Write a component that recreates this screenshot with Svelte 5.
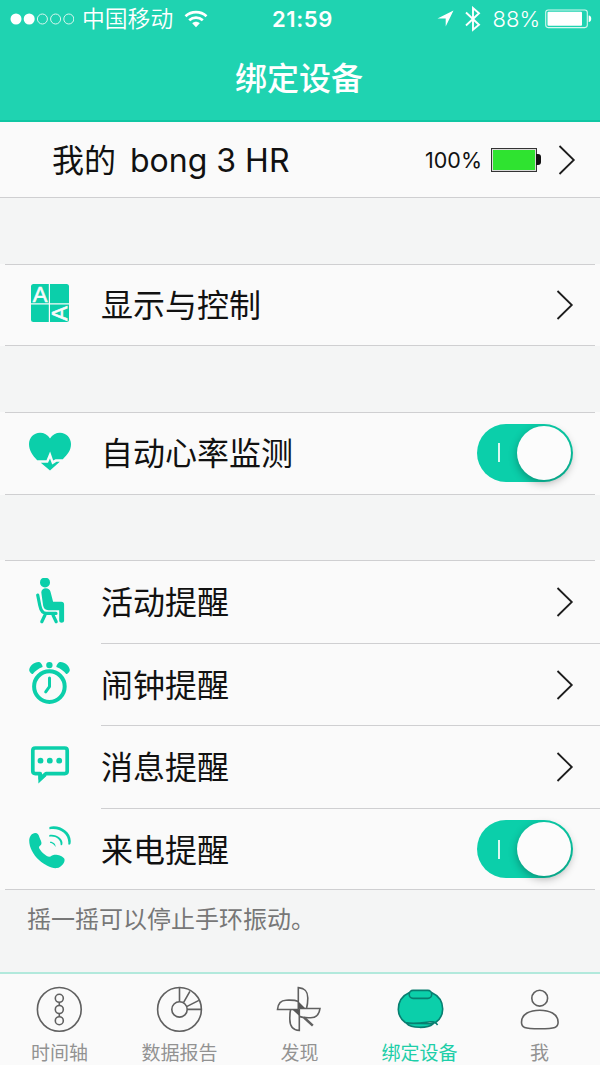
<script lang="ts">
    type Item = { icon: string; label: string; toggle?: boolean };

    let groups = $state<Item[][]>([
        [{ icon: 'display', label: '显示与控制' }],
        [{ icon: 'heart', label: '自动心率监测', toggle: true }],
        [
            { icon: 'activity', label: '活动提醒' },
            { icon: 'alarm', label: '闹钟提醒' },
            { icon: 'message', label: '消息提醒' },
            { icon: 'call', label: '来电提醒', toggle: true }
        ]
    ]);

    const tabs = [
        { id: 'timeline', label: '时间轴' },
        { id: 'report', label: '数据报告' },
        { id: 'discover', label: '发现' },
        { id: 'device', label: '绑定设备' },
        { id: 'me', label: '我' }
    ];
    let activeTab = $state('device');
</script>

{#snippet chevron()}
    <svg class="chevron" width="18" height="30" viewBox="0 0 18 30">
        <path d="M1.5 1 15.8 15 1.5 29" fill="none" stroke="#1c1c1c" stroke-width="1.8" />
    </svg>
{/snippet}

{#snippet rowIcon(name: string)}
    <svg class="row-icon" width="48" height="48" viewBox="0 0 48 48">
        {#if name === 'display'}
            <rect x="6" y="3" width="38" height="38" rx="2.5" />
            <path d="M24.4 3v38M6 22.8h38" stroke="#fafafa" stroke-width="1.2" />
            <text x="15" y="20.8" text-anchor="middle">A</text>
            <text x="0" y="0" text-anchor="middle" transform="translate(42.3 32.3) rotate(-90)">A</text>
        {:else if name === 'heart'}
            <path
                d="M25 9.4C22.8 5.7 19 3.8 15 3.8 8.6 3.8 4 8.9 4 15.1c0 6.3 3.3 11.3 8.2 16.1h9.3l3.6-8.7 3.1 9.1 2.3-1.4h7.3C42.9 25.5 46 21 46 15.1 46 8.9 41.2 3.8 35 3.8c-4 0-7.7 1.9-10 5.6z"
            />
            <path d="M15.8 33.7h7.2l2-4.200 2.200 6 4.400-2.700h3.200L25 41.500z" />
        {:else if name === 'activity'}
            <circle cx="20" cy="4.4" r="5" />
            <path
                d="M16.300 14.500c0-2.500 1.900-4.300 4.500-4.300 2.400 0 4.200 1.300 4.700 3.500l2.600 10.100h8.300c1.700 0 2.700 1.100 2.700 2.600v16c0 3-4.900 3-4.900 0V32.200H23.300c-3 0-4.600-1.500-5.200-4.600z"
            />
            <path
                class="line"
                d="M12.700 17l2.100 10.500c.9 4.600 2.700 7.900 6.600 7.900H31M20 37l-3.200 6.700M28 37l3.200 6.700"
                stroke-width="3.200"
            />
        {:else if name === 'alarm'}
            <circle class="line" cx="24.4" cy="26.600" r="15.300" stroke-width="4" />
            <path class="line" d="M24.500 18v8.600l-3.800 5.200" stroke-width="3" />
            <circle cx="24.400" cy="5.100" r="3.200" />
            <path d="M4.200 10C4.200 6 9.500 1.600 14 1.900c2.200.4 3.800 3.900 3.600 5-4.300 1.500-7.200 3.800-9.800 7.200-1.500 0-3.500-2.300-3.600-4.100z" />
            <path d="M44.800 10c0-4-5.300-8.400-9.800-8.100-2.200.4-3.800 3.900-3.600 5 4.300 1.500 7.200 3.800 9.800 7.200 1.500 0 3.500-2.300 3.600-4.100z" />
        {:else if name === 'message'}
            <path
                class="line"
                d="M10.300 5h29.400c1.500 0 2.500 1 2.500 2.500v20.600c0 1.500-1 2.500-2.500 2.500H21l-5.800 5V30.600h-4.900c-1.500 0-2.500-1-2.500-2.500V7.500C7.800 6 8.800 5 10.300 5z"
                stroke-width="3.700"
            />
            <path d="M13.400 31v9.600l8-7.600z" />
            <circle cx="15.500" cy="17.700" r="2.900" />
            <circle cx="24.800" cy="17.700" r="2.900" />
            <circle cx="34.200" cy="17.700" r="2.900" />
        {:else if name === 'call'}
            <path
                d="M4.200 15.500c0-4 2.700-7.600 6-7.600 2.600 0 3.400 1.700 4.300 4.500.8 2.200 2.400 4.500 1.900 6.600-.4 1.500-2.500 2-2.400 3.500.4 2.800 7.300 9.200 10.300 9.200 1.900 0 2.500-1.600 5-1.900 3.200-.3 8.300 1.200 9.900 3.700 1.800 3-2.700 9-7.200 9.600-5.500.7-12.400-3.300-18-8.200C8.200 29.800 4.200 22.300 4.200 15.500z"
            />
            <path d="M24.400 1.900C34.500-1 47.700 7 45.500 18.600c-.3 1.500-2.300 1.500-2.200 0C44 8.500 34.500 2.300 24.400 4.300z" />
            <path d="M24.300 9.900c6.400-1.500 14.800 4 13 9.700-.4 1.100-1.700.9-1.700-.2.300-5.200-5.500-8.900-11.300-7.700z" />
            <path d="M25 16.700c3-.2 6 2.200 5.500 5.200-1-2.100-2.900-3.800-5.500-4.200z" />
        {/if}
    </svg>
{/snippet}

{#snippet tabIcon(name: string)}
    <svg class="tab-icon" width="48" height="48" viewBox="0 0 48 48">
        {#if name === 'timeline'}
            <circle cx="23.300" cy="23.400" r="21.900" />
            <circle cx="23.300" cy="12.300" r="4" />
            <circle cx="23.300" cy="23.500" r="4" />
            <circle cx="23.300" cy="34.700" r="4" />
            <path d="M23.300 16.300v3.200M23.300 27.500v3.200" />
        {:else if name === 'report'}
            <circle cx="23.500" cy="23.400" r="21.900" />
            <circle cx="23.500" cy="23.400" r="7.700" />
            <path d="M23.500 1.500v14.200M27.500 16.700 33.900 5.300M30.600 20.600l12.300-6.200M31.200 23.400h14.200" />
        {:else if name === 'discover'}
            <path d="M22.300 23V1.600c7.400.8 9.500 4.400 9.500 10.400 0 3.900-.4 7.300-1.300 10.500" />
            <path d="M22.300 23.500H1.500C2 18 5 14.200 10 14.200c4.600 0 8.500-.5 12.300 1.200" />
            <path d="M23.300 23v21.500c-6.300-.3-9.500-4.600-9.500-11.500 0-3.500 0-6.500.8-9.500" />
            <path d="M23.300 22.500H44c-.8 6-4 9.200-9.300 9.200-4.400 0-8 .3-11.400-1.400" />
            <path d="M22.500 15.500l7 7h-6.200v7.500l-7-6.500h6.200z" fill="#575757" stroke="none" />
            <path d="M28 31.500l8.800 8.200" stroke-width="2.400" />
        {:else if name === 'device'}
            <path class="band" d="M10.500 37.200c4.500 5.400 21.500 5.400 26.500.6z" />
            <path
                class="band"
                d="M13.500 6.500C5.500 10 2.300 16 2.300 23.500c0 5.300 2.500 9.700 7 13 8.500 1.800 17 .2 25-.7 3.300-.3 4.300 1.100 5.300.700 4.600-3.200 7.100-7.900 7.100-13.400 0-7.500-3.400-13.100-11.200-16.600z"
            />
            <rect class="band" x="13.200" y="4.400" width="22.500" height="8" rx="3.800" />
            <path d="M34.300 35.800c3.300-.2 5.700.8 7.300 3.200" />
        {:else}
            <circle cx="23.700" cy="12.200" r="7.900" />
            <path d="M23.700 24.200c9.500 0 18.400 3.500 18.400 12 0 5.200-2.500 6.600-18.400 6.600S5.500 41.400 5.500 36.200c0-8.500 8.700-12 18.200-12z" />
        {/if}
    </svg>
{/snippet}

<div class="screen">
    <header>
        <div class="status-bar">
            <div class="status-side">
                <svg width="64" height="14" viewBox="0 0 64 14">
                    {#each [0, 1, 2, 3, 4] as i}
                        <circle
                            cx={6 + i * 13.2}
                            cy="7"
                            r={i < 2 ? 5.5 : 5}
                            fill={i < 2 ? '#fff' : 'none'}
                            stroke={i < 2 ? 'none' : '#d8f7ef'}
                        />
                    {/each}
                </svg>
                <span class="carrier">中国移动</span>
                <svg class="wifi" width="24" height="18" viewBox="0 0 24 18">
                    <path d="M1.500 6.200c6-5.500 15-5.500 21 0M5.200 10.300c4-3.700 9.600-3.700 13.600 0" fill="none" stroke="#fff" stroke-width="2.700" />
                    <path d="M8.200 13.200c2.200-2 5.400-2 7.600 0L12 17.200z" fill="#fff" />
                </svg>
            </div>
            <span class="time">21:59</span>
            <div class="status-side right">
                <svg width="17" height="17" viewBox="0 0 17 17">
                    <path d="M16.500.5 8.700 16.500V8.500H.500z" fill="#fff" />
                </svg>
                <svg class="bluetooth" width="16" height="26" viewBox="0 0 16 26">
                    <path d="M1 6.500l13 12.300-6 5V2l6 5.200L1 19.500" fill="none" stroke="#fff" stroke-width="1.900" />
                </svg>
                <span class="percent">88%</span>
                <svg width="47" height="20" viewBox="0 0 47 20">
                    <rect x=".7" y="1" width="41.600" height="17.600" rx="2.500" fill="none" stroke="#d8f7ef" stroke-width="1.100" />
                    <rect x="2.500" y="2.800" width="34.500" height="14" rx="1" fill="#fff" />
                    <path d="M43.700 6.500c3.400 0 3.400 6.600 0 6.600z" fill="#fff" />
                </svg>
            </div>
        </div>
        <h1>绑定设备</h1>
    </header>

    <main>
        <div class="device">
            <span class="device-name"><span class="owner">我的</span> bong 3 HR</span>
            <span class="device-percent">100%</span>
            <div class="battery"><div class="battery-level"></div></div>
            {@render chevron()}
        </div>

        {#each groups as group}
            <div class="group">
                {#each group as item}
                    <div class="row">
                        {@render rowIcon(item.icon)}
                        <div class="row-body">
                            <span class="row-label">{item.label}</span>
                            {#if item.toggle === undefined}
                                {@render chevron()}
                            {:else}
                                <button
                                    class="toggle"
                                    class:on={item.toggle}
                                    role="switch"
                                    aria-checked={item.toggle}
                                    aria-label={item.label}
                                    onclick={() => (item.toggle = !item.toggle)}
                                >
                                    <span class="mark"></span>
                                    <span class="knob"></span>
                                </button>
                            {/if}
                        </div>
                    </div>
                {/each}
            </div>
        {/each}
        <p class="hint">摇一摇可以停止手环振动。</p>
    </main>

    <nav>
        {#each tabs as tab}
            <button class="tab" class:active={tab.id === activeTab} onclick={() => (activeTab = tab.id)}>
                {@render tabIcon(tab.id)}
                <span>{tab.label}</span>
            </button>
        {/each}
    </nav>
</div>

<style>
    .screen {
        --accent: #0bcfaa;
        --line: #cfcfd1;
        display: flex;
        flex-direction: column;
        width: 600px;
        height: 1065px;
        overflow: hidden;
        background: #f4f5f5;
        color: #111;
        font-family: Inter, "Noto Sans CJK SC", sans-serif;
    }

    svg {
        display: block;
        flex-shrink: 0;
    }

    button {
        padding: 0;
        border: 0;
        font: inherit;
        cursor: pointer;
    }

    header {
        box-sizing: border-box;
        height: 122px;
        border-bottom: 2px solid #0fc7a3;
        background: #1fd3b1;
        color: #fff;
    }

    .status-bar {
        display: flex;
        align-items: center;
        height: 37px;
        padding: 0 8px 0 10px;
    }

    .status-side {
        display: flex;
        flex: 1;
        align-items: center;
    }

    .status-side.right {
        justify-content: flex-end;
    }

    .carrier {
        margin-left: 8px;
        font-size: 22.8px;
        line-height: 36px;
        font-weight: 350;
    }

    .wifi {
        margin-left: 11px;
    }

    .time {
        padding-left: 3px;
        font-size: 22px;
        font-weight: 600;
        letter-spacing: 0.6px;
    }

    .bluetooth {
        margin-left: 11px;
    }

    .percent {
        margin: 0 5px 0 11px;
        font-size: 22px;
        font-weight: 350;
    }

    h1 {
        margin: 20px 0 0;
        padding-right: 2px;
        font-size: 32px;
        font-weight: 500;
        line-height: 44px;
        text-align: center;
    }

    main {
        flex: 1;
    }

    .device {
        box-sizing: border-box;
        display: flex;
        align-items: center;
        height: 76px;
        padding: 0 24px 0 52px;
        border-bottom: 1px solid var(--line);
        background: #fafafa;
    }

    .device-name {
        flex: 1;
        padding-bottom: 3px;
        font-size: 32px;
    }

    .owner {
        margin-right: 5px;
    }

    .device-percent {
        font-size: 21.5px;
    }

    .battery {
        position: relative;
        box-sizing: border-box;
        width: 46px;
        height: 24px;
        margin: 0 21px 0 9px;
        padding: 1px;
        border: 1px solid #333;
        background: #d9d9d9;
    }

    .battery::after {
        content: "";
        position: absolute;
        top: 5px;
        left: 44px;
        width: 5px;
        height: 11px;
        border-radius: 0 3px 3px 0;
        background: #111;
    }

    .battery-level {
        height: 100%;
        background: #2fe330;
    }

    .group {
        margin-top: 65.8px;
        background: linear-gradient(var(--line), var(--line)) 5px 0 / 590px 1px no-repeat,
            linear-gradient(var(--line), var(--line)) 5px 100% / 590px 1px no-repeat, #fafafa;
    }

    .row {
        display: flex;
        align-items: center;
        height: 82.5px;
        padding-left: 25px;
    }

    .row-body {
        box-sizing: border-box;
        display: flex;
        flex: 1;
        align-items: center;
        justify-content: space-between;
        height: 100%;
        margin-left: 28px;
        padding-right: 26px;
    }

    .row + .row .row-body {
        border-top: 1px solid var(--line);
    }

    .row-label {
        padding-top: 2px;
        font-size: 32px;
        line-height: 46px;
    }

    .row-icon {
        fill: var(--accent);
    }

    .row-icon text {
        fill: #fafafa;
        stroke: #fafafa;
        stroke-width: 0.6;
        font: 22px "Liberation Sans", sans-serif;
    }

    .line {
        fill: none;
        stroke: var(--accent);
        stroke-linecap: round;
        stroke-linejoin: round;
    }

    .toggle {
        display: flex;
        align-items: center;
        justify-content: space-between;
        width: 96px;
        height: 58px;
        margin: 0 1px 1px 0;
        padding: 0 2px 0 21px;
        border-radius: 29px;
        background: #ccc;
    }

    .toggle.on {
        background: var(--accent);
    }

    .toggle:not(.on) {
        flex-direction: row-reverse;
        padding: 0 21px 0 2px;
    }

    .mark {
        width: 2px;
        height: 19px;
        background: #d9f8f0;
    }

    .knob {
        width: 54px;
        height: 54px;
        border-radius: 50%;
        background: #fcfcfc;
        box-shadow: 0 3px 8px rgba(0, 0, 0, 0.3);
    }

    .hint {
        margin: 12px 0 0 27px;
        color: #777;
        font-size: 24px;
        line-height: 36px;
    }

    nav {
        box-sizing: border-box;
        display: flex;
        height: 93px;
        border-top: 2px solid #b2e9dc;
        background: #fafafa;
    }

    .tab {
        display: flex;
        flex: 1;
        flex-direction: column;
        align-items: center;
        padding-top: 12px;
        background: none;
        color: #929292;
        font-size: 19px;
        line-height: 28px;
    }

    .tab span {
        margin: 6px 1px 0 0;
    }

    .tab.active {
        color: #1dcea8;
    }

    .tab-icon {
        fill: none;
        stroke: #606060;
        stroke-width: 1.6;
    }

    .active .tab-icon {
        stroke: #087e70;
    }

    .band {
        fill: var(--accent);
    }
</style>
